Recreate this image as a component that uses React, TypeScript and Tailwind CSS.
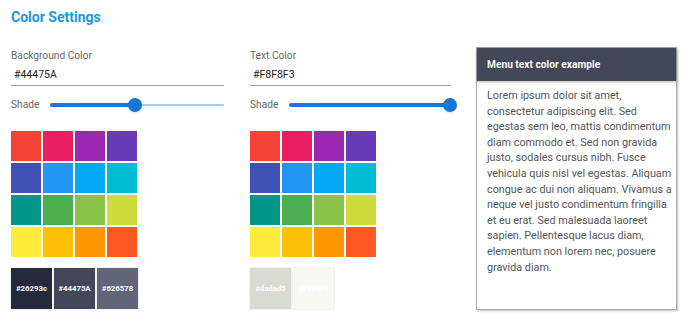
import React from 'react';

const PALETTE = [
  '#f44336', '#e91e63', '#9c27b0', '#673ab7',
  '#3f51b5', '#2196f3', '#03a9f4', '#00bcd4',
  '#009688', '#4caf50', '#8bc34a', '#cddc39',
  '#ffeb3b', '#ffc107', '#ff9800', '#ff5722',
];

interface ColumnProps {
  label: string;
  value: string;
  width: string;
  sliderWidth: string;
  percent: number;
  shades: string[];
}

// one settings column: field, shade slider, palette, generated shades
const ColorColumn: React.FC<ColumnProps> = ({ label, value, width, sliderWidth, percent, shades }) => (
  <div className={`flex flex-col ${width}`}>
    <label className="text-[10.2px] leading-[14px] text-[#666] mt-[49px]">{label}</label>
    <div className="mt-[1px] h-[22px] pl-[3px] text-[10.5px] leading-[22px] text-[#222] border-b border-[#9e9e9e]">
      {value}
    </div>
    <div className="flex items-center mt-[9px] h-[20px]">
      <span className="text-[10.2px] text-[#666] w-[39px]">Shade</span>
      <div className={`relative h-[20px] ${sliderWidth}`}>
        <div className="absolute left-0 right-0 top-[9px] h-[2px] bg-[#a8c9f0] rounded" />
        <div className="absolute left-0 top-[8px] h-[4px] bg-[#1976d2] rounded" style={{ width: `${percent}%` }} />
        <div
          className="absolute top-[3px] w-[14px] h-[14px] -ml-[7px] rounded-full bg-[#1976d2] shadow-sm"
          style={{ left: `${percent}%` }}
        />
      </div>
    </div>
    <div className="grid grid-cols-[repeat(4,30px)] gap-[2px] mt-[16px]">
      {PALETTE.map((c) => (
        <div key={c} className="w-[30px] h-[30px] outline outline-1 outline-white shadow-[0_1px_1px_rgba(0,0,0,0.15)]" style={{ backgroundColor: c }} />
      ))}
    </div>
    <div className="flex gap-[2px] mt-[11px]">
      {shades.map((s) => (
        <div
          key={s}
          className="w-[41px] h-[41px] flex items-center justify-center text-[7.8px] font-bold text-white shadow-[0_0_1px_rgba(0,0,0,0.3)]"
          style={{ backgroundColor: s }}
        >
          {s}
        </div>
      ))}
    </div>
  </div>
);

export default function App() {
  return (
    <div className="w-[688px] h-[324px] bg-white overflow-hidden relative font-['Roboto',sans-serif]">
      <h1 className="absolute left-[11px] top-[7px] text-[14px] font-bold text-[#2196e0]">Color Settings</h1>
      <div className="flex pl-[11px]">
        <ColorColumn
          label="Background Color"
          value="#44475A"
          width="w-[213px]"
          sliderWidth="w-[174px]"
          percent={49}
          shades={['#26293c', '#44475A', '#626578']}
        />
        <div className="w-[26px]" />
        <ColorColumn
          label="Text Color"
          value="#F8F8F3"
          width="w-[200px]"
          sliderWidth="w-[162px]"
          percent={100}
          shades={['#dadad5', '#F8F8F3']}
        />
        <div className="ml-[26px] mt-[47px] w-[201px] h-[263px] border border-[#aaa] shadow-[1px_1px_2px_rgba(0,0,0,0.25)] flex flex-col">
          <div className="shrink-0 h-[33px] bg-[#44475a] flex items-center px-[10px] text-[10.2px] font-bold text-[#f8f8f3] shadow-[0_1px_3px_rgba(0,0,0,0.3)]">
            Menu text color example
          </div>
          <p className="pl-[10px] pr-[3px] pt-[7px] text-[10.8px] leading-[15.6px] text-[#555]">
            Lorem ipsum dolor sit amet, consectetur adipiscing elit. Sed egestas sem leo, mattis condimentum diam commodo et. Sed non gravida justo, sodales cursus nibh. Fusce vehicula quis nisl vel egestas. Aliquam congue ac dui non aliquam. Vivamus a neque vel justo condimentum fringilla et eu erat. Sed malesuada laoreet sapien. Pellentesque lacus diam, elementum non lorem nec, posuere gravida diam.
          </p>
        </div>
      </div>
    </div>
  );
}
